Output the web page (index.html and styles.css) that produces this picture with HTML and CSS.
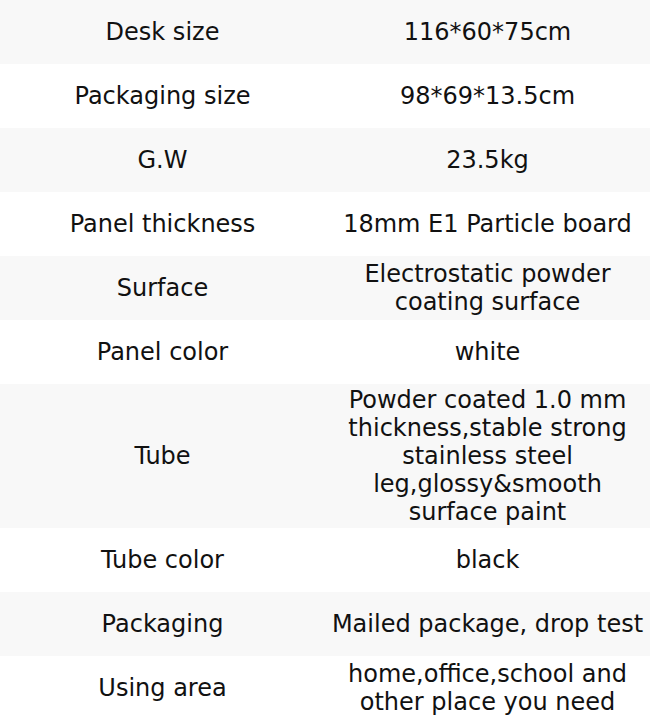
FILE: index.html
```html
<!DOCTYPE html>
<html>
<head>
<meta charset="utf-8">
<link rel="stylesheet" href="styles.css">
</head>
<body>
<table class="spec">
<tbody>
<tr><td>Desk size</td><td>116*60*75cm</td></tr>
<tr><td>Packaging size</td><td>98*69*13.5cm</td></tr>
<tr><td>G.W</td><td>23.5kg</td></tr>
<tr><td>Panel thickness</td><td>18mm E1 Particle board</td></tr>
<tr><td>Surface</td><td>Electrostatic powder coating surface</td></tr>
<tr><td>Panel color</td><td>white</td></tr>
<tr><td>Tube</td><td>Powder coated 1.0 mm thickness,stable strong stainless steel leg,glossy&amp;smooth surface paint</td></tr>
<tr><td>Tube color</td><td>black</td></tr>
<tr><td>Packaging</td><td>Mailed package, drop test</td></tr>
<tr><td>Using area</td><td>home,office,school and other place you need</td></tr>
</tbody>
</table>
</body>
</html>
```
FILE: styles.css
```css
html, body {
  margin: 0;
  padding: 0;
  background: #ffffff;
}
body {
  font-family: "DejaVu Sans", sans-serif;
  font-size: 24px;
  color: #111111;
}
.spec {
  width: 650px;
  border-collapse: collapse;
  table-layout: fixed;
}
.spec td {
  width: 50%;
  height: 60px;
  padding: 2px 6px;
  text-align: center;
  vertical-align: middle;
  line-height: 28px;
}
.spec tr:nth-child(odd) {
  background: #f8f8f8;
}
```
